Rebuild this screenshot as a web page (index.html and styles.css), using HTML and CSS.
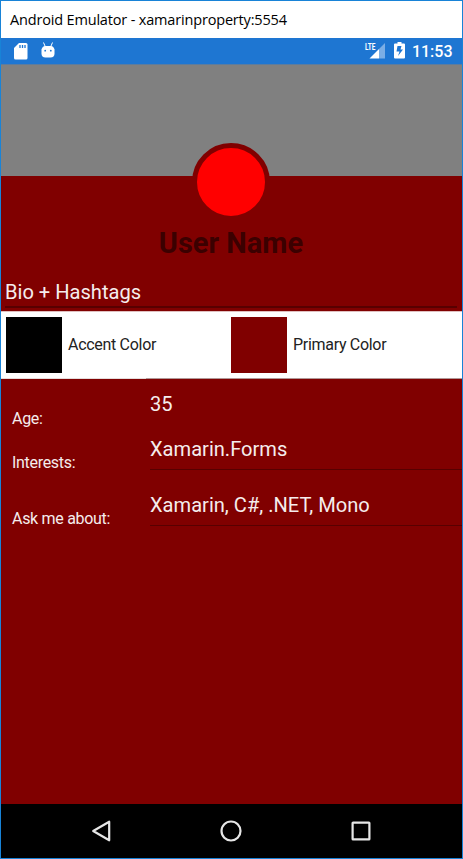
FILE: index.html
```html
<!DOCTYPE html>
<html lang="en">
<head>
<meta charset="utf-8">
<title>Android Emulator</title>
<link rel="stylesheet" href="styles.css">
</head>
<body>
<div class="window">
  <header class="titlebar"><span class="title">Android Emulator - xamarinproperty:5554</span></header>
  <div class="statusbar">
    <svg class="sd" width="14" height="17" viewBox="0 0 14 17"><path fill="#fff" d="M5 0h7q1.500 0 1.500 1.500v13.500q0 1.500-1.500 1.500H1.500Q0 16.500 0 15V5z"/><path stroke="#1e76d2" stroke-width="1.300" d="M6 2v3M8.500 2v3M11 2v3"/></svg>
    <svg class="droid" width="14" height="17" viewBox="0 0 14 17"><path stroke="#fff" stroke-width="1" fill="none" d="M2.500 .5 4 4M11.500 .5 10 4"/><path fill="#fff" d="M.5 7.500Q1.500 4 4 4h6q2.500 0 3.500 3.500v4q0 4-4 4h-5q-4 0-4-4z"/><circle cx="4.200" cy="8.700" r=".9" fill="#1e76d2"/><circle cx="9.800" cy="8.700" r=".9" fill="#1e76d2"/></svg>
    <div class="status-right">
      <svg class="signal" width="21" height="17" viewBox="0 0 21 17"><path fill="#7baee5" d="M20 1v15.500H14V7z"/><path fill="#fff" d="M14 7v9.500H4.500z"/><text class="lte" transform="scale(1 1.300)" x="0" y="5.800" textLength="10.500" lengthAdjust="spacingAndGlyphs">LTE</text></svg>
      <svg class="battery" width="11" height="17" viewBox="0 0 11 17"><path fill="#fff" d="M3.500 0h4v1.500H10q1 0 1 1v13q0 1-1 1H1q-1 0-1-1v-13q0-1 1-1h2.500z"/><path fill="#1e76d2" d="M7.500 4H3.500L2.500 9.500h3L4 14 9 7.500H6.500z"/></svg>
      <span class="clock">11:53</span>
    </div>
  </div>
  <main class="profile">
    <div class="cover"></div>
    <div class="avatar"></div>
    <h1 class="name">User Name</h1>
    <div class="bio"><span>Bio + Hashtags</span></div>
    <div class="colors">
      <div class="color"><i class="swatch accent"></i><span class="label">Accent Color</span></div>
      <div class="color"><i class="swatch primary"></i><span class="label">Primary Color</span></div>
    </div>
    <div class="field age"><label>Age:</label><div class="value">35</div></div>
    <div class="field"><label>Interests:</label><div class="value line">Xamarin.Forms</div></div>
    <div class="field"><label>Ask me about:</label><div class="value line">Xamarin, C#, .NET, Mono</div></div>
  </main>
  <nav class="navbar">
    <svg width="24" height="24" viewBox="0 0 24 24"><path d="M20.200 2.700v18.600L4.200 12z"/></svg>
    <svg width="24" height="24" viewBox="0 0 24 24"><circle cx="12" cy="12" r="9.500"/></svg>
    <svg width="24" height="24" viewBox="0 0 24 24"><rect x="3.600" y="3.600" width="16.800" height="16.800" rx=".5"/></svg>
  </nav>
</div>
</body>
</html>
```
FILE: styles.css
```css
* { box-sizing: border-box; }
body { margin: 0; font-family: Roboto, sans-serif; }
.window {
  width: 463px; height: 859px;
  border: 1px solid #1883d7;
  display: flex; flex-direction: column;
  background: #800000; overflow: hidden;
}
.titlebar { height: 37px; background: #fff; padding-left: 9px; line-height: 37px; flex: none; }
.title { font-family: "Open Sans", "Noto Sans", sans-serif; font-size: 14.5px; letter-spacing: -0.17px; color: #000; white-space: nowrap; }
.statusbar { height: 27px; flex: none; background: #1e76d2; display: flex; align-items: flex-start; padding: 4px 9.5px 0 13px; border-bottom: 1px solid #5c7c9e; }
.sd { margin-top: 1px; }
.droid { margin-left: 13px; }
.status-right { margin-left: auto; display: flex; }
.signal { overflow: visible; }
.lte { font: bold 7.5px Roboto, sans-serif; fill: #fff; }
.battery { margin: 0 7px 0 8px; }
.clock { color: #fff; font-size: 16px; font-weight: 500; line-height: 20px; }
.profile { flex: 1; min-height: 0; display: flex; flex-direction: column; }
.cover { height: 111px; flex: none; background: #808080; }
.avatar { width: 78px; height: 78px; flex: none; margin: -33px 0 0 191px; border-radius: 50%; background: #f00; border: 5px solid #800000; }
.name { margin: 5px 1px 0 0; font-size: 29px; line-height: 34px; height: 34px; flex: none; text-align: center; color: #3b0000; font-weight: 700; }
.bio { height: 48px; flex: none; margin: 0 5px 3px 4px; padding-top: 18px; border-bottom: 2px solid #580000; color: #f5eded; font-size: 20.1px; line-height: 28px; }
.colors { height: 68px; flex: none; background: linear-gradient(90deg, #e4dcdc 145px, #b09898 145px) 0 100% / 100% 1px no-repeat #fff; display: grid; grid-template-columns: 225px 1fr; padding: 5px 5px 6px; border-top: 1px solid #dfc0c0; }
.color { display: flex; align-items: flex-start; color: #222; font-size: 16px; gap: 6px; }
.label { line-height: 20px; margin-top: 18px; letter-spacing: -0.3px; }
.swatch { width: 56px; height: 56px; }
.accent { background: #000; }
.primary { background: #800000; }
.field { display: grid; grid-template: 100% / 145px 1fr; height: 56px; flex: none; color: #f5eded; }
.field label { padding: 39px 0 0 11px; font-size: 16px; line-height: 20px; letter-spacing: -0.3px; }
.value { padding: 22px 0 0; margin-left: 4px; font-size: 20.1px; line-height: 26px; }
.line { border-bottom: 1px solid #580000; }
.age { height: 35px; }
.age label { padding-top: 30px; }
.age .value { padding-top: 12px; }
.navbar { height: 54px; flex: none; background: #000; display: flex; padding-right: 2px; justify-content: center; align-items: center; gap: 106px; }
.navbar svg { fill: none; stroke: #e6e6e6; stroke-width: 2.2; stroke-linejoin: round; }
```
